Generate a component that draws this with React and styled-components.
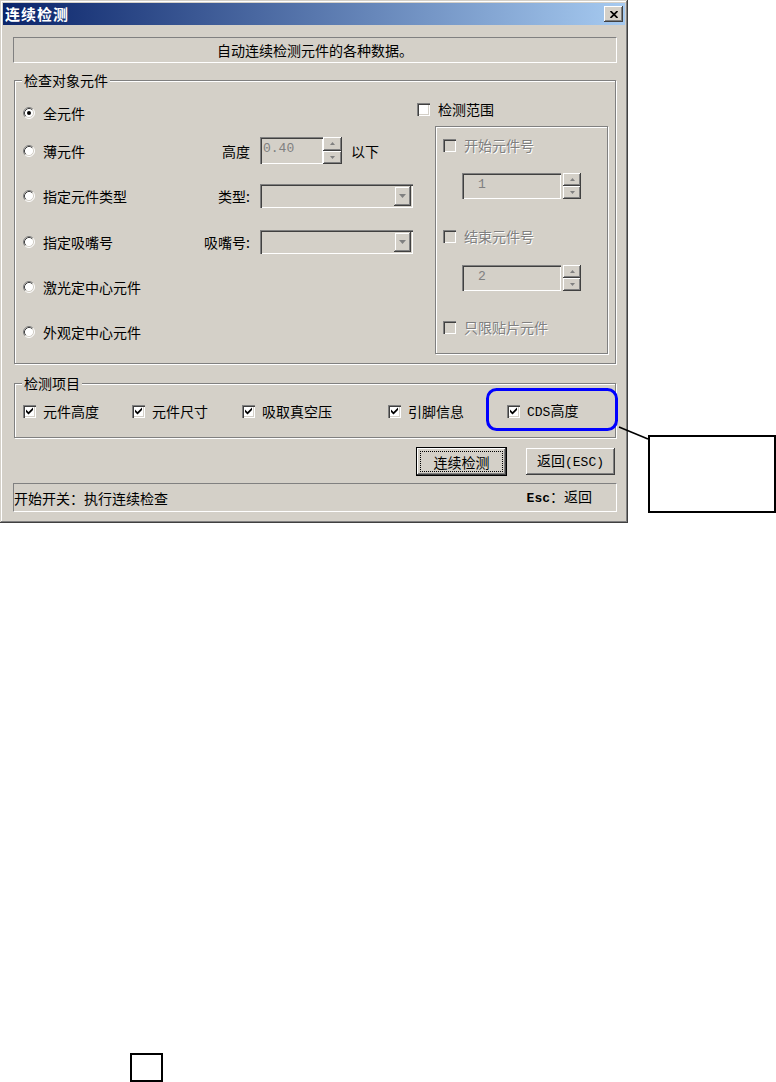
import React from 'react';
import styled, { createGlobalStyle } from 'styled-components';

const GlobalStyle = createGlobalStyle`
  html, body {
    margin: 0;
    padding: 0;
    background: #fff;
    overflow: hidden;
  }
  body {
    font-family: "Noto Sans CJK SC", "Noto Sans", sans-serif;
    font-size: 14px;
    line-height: 16px;
    color: #000;
  }
`;

const Page = styled.div`
  position: relative;
  width: 776px;
  height: 1082px;
`;

const TopRow = styled.div`
  display: flex;
  align-items: flex-start;
`;

const Window = styled.div`
  width: 628px;
  height: 523px;
  box-sizing: border-box;
  padding: 3px;
  background: #d4d0c8;
  box-shadow: inset -1px -1px #404040, inset 1px 1px #d4d0c8,
    inset -2px -2px #808080, inset 2px 2px #fff;
  display: flex;
  flex-direction: column;
`;

const TitleBar = styled.div`
  height: 22px;
  display: flex;
  align-items: center;
  justify-content: space-between;
  padding: 0 2px 0 2px;
  background: linear-gradient(to right, #0a246a, #a6caf0);
`;

const Title = styled.span`
  color: #fff;
  font-weight: bold;
  font-size: 15px;
  letter-spacing: 1px;
`;

const CloseButton = styled.div`
  width: 19px;
  height: 16px;
  background: #d4d0c8;
  box-shadow: inset -1px -1px #404040, inset 1px 1px #fff,
    inset -2px -2px #808080, inset 2px 2px #d4d0c8;
  display: flex;
  align-items: center;
  justify-content: center;
`;

const Body = styled.div`
  padding: 12px 8px 0 10px;
  display: flex;
  flex-direction: column;
`;

const Description = styled.div`
  width: 604px;
  height: 26px;
  box-sizing: border-box;
  border-top: 1px solid #808080;
  border-left: 1px solid #808080;
  border-bottom: 1px solid #fff;
  border-right: 1px solid #fff;
  display: flex;
  align-items: center;
  justify-content: center;
`;

const Group = styled.div`
  position: relative;
  width: 602px;
  height: ${p => p.$h}px;
  margin: ${p => p.$mt}px 0 0 1px;
  box-sizing: border-box;
  border: 1px solid #808080;
  box-shadow: inset 1px 1px #fff, 1px 1px #fff;
`;

const GroupLabel = styled.span`
  position: absolute;
  top: -9px;
  left: 7px;
  padding: 0 2px;
  background: #d4d0c8;
  line-height: 16px;
`;

const GroupBody = styled.div`
  display: flex;
  padding: 16px 7px 0 8px;
`;

const LeftCol = styled.div`
  flex: 1;
  min-width: 0;
  padding-top: 4px;
  display: flex;
  flex-direction: column;
`;

const OptionRow = styled.div`
  display: grid;
  grid-template-columns: 150px 67px 1fr;
  column-gap: 10px;
  align-items: center;
  height: 24px;
  margin-top: ${p => p.$mt || 0}px;
`;

const Option = styled.label`
  display: flex;
  align-items: center;
  gap: 8px;
  white-space: nowrap;
`;

const FieldLabel = styled.span`
  justify-self: end;
  white-space: nowrap;
`;

const Controls = styled.div`
  display: flex;
  align-items: center;
  gap: 9px;
`;

const RightCol = styled.div`
  flex: none;
  width: 191px;
  display: flex;
  flex-direction: column;
`;

const CheckRow = styled.label`
  display: flex;
  align-items: center;
  gap: ${p => p.$gap || 8}px;
  height: 24px;
  width: ${p => (p.$w ? `${p.$w}px` : 'auto')};
  flex: none;
  margin-top: ${p => p.$mt || 0}px;
  white-space: nowrap;
  color: ${p => (p.$disabled ? '#808080' : '#000')};
  text-shadow: ${p => (p.$disabled ? '1px 1px 0 #fff' : 'none')};
`;

const InnerFrame = styled.div`
  width: 173px;
  height: 228px;
  margin: 5px 0 0 18px;
  box-sizing: border-box;
  border: 1px solid #808080;
  box-shadow: inset 1px 1px #fff, 1px 1px #fff;
  padding: 6px 0 0 7px;
  display: flex;
  flex-direction: column;
`;

const Box = styled.span`
  width: 13px;
  height: 13px;
  flex: none;
  box-sizing: border-box;
  background: ${p => (p.$disabled ? '#d4d0c8' : '#fff')};
  box-shadow: inset 1px 1px #808080, inset 2px 2px #404040,
    inset -1px -1px #fff, inset -2px -2px #d4d0c8;
  display: flex;
  align-items: center;
  justify-content: center;
`;

const SpinBox = styled.div`
  display: flex;
  height: ${p => p.$h}px;
  margin: ${p => p.$mt || 0}px 0 0 ${p => p.$ml || 0}px;
`;

const SpinInput = styled.div`
  width: ${p => p.$w}px;
  box-sizing: border-box;
  background: #d4d0c8;
  box-shadow: inset 1px 1px #808080, inset 2px 2px #404040,
    inset -1px -1px #fff, inset -2px -2px #d4d0c8;
  padding: 4px 0 0 ${p => p.$pad}px;
  color: #808080;
  font-family: "Liberation Mono", monospace;
  font-size: 13px;
`;

const SpinButtons = styled.div`
  width: ${p => p.$w}px;
  margin-left: ${p => p.$gap || 0}px;
  display: flex;
  flex-direction: column;
`;

const RaisedButton = styled.div`
  flex: 1;
  background: #d4d0c8;
  box-shadow: inset -1px -1px #404040, inset 1px 1px #fff,
    inset -2px -2px #808080;
  display: flex;
  align-items: center;
  justify-content: center;
`;

const Combo = styled.div`
  width: 153px;
  height: 24px;
  box-sizing: border-box;
  padding: 2px;
  background: #d4d0c8;
  box-shadow: inset 1px 1px #808080, inset 2px 2px #404040,
    inset -1px -1px #fff, inset -2px -2px #d4d0c8;
  display: flex;
  justify-content: flex-end;
`;

const DropButton = styled.div`
  width: 17px;
  background: #d4d0c8;
  box-shadow: inset -1px -1px #404040, inset 1px 1px #d4d0c8,
    inset -2px -2px #808080, inset 2px 2px #fff;
  display: flex;
  align-items: center;
  justify-content: center;
`;

const ItemsRow = styled.div`
  display: flex;
  padding: 15px 0 0 8px;
`;

const Latin = styled.span`
  font-family: "Liberation Mono", monospace;
  font-size: 13px;
  font-weight: ${p => (p.$bold ? 'bold' : 'normal')};
`;

const ButtonRow = styled.div`
  display: flex;
  justify-content: flex-end;
  gap: 18px;
  margin-top: 9px;
  padding-right: 1px;
`;

const PushButton = styled.div`
  width: 91px;
  height: 29px;
  box-sizing: border-box;
  background: #d4d0c8;
  border: 1px solid ${p => (p.$default ? '#000' : 'transparent')};
  box-shadow: ${p =>
    p.$default
      ? 'inset -1px -1px #404040, inset 1px 1px #fff, inset -2px -2px #808080'
      : 'inset -1px -1px #404040, inset 1px 1px #fff, inset -2px -2px #808080, inset 2px 2px #d4d0c8'};
  display: flex;
  align-items: center;
  justify-content: center;
  padding: 3px;
`;

const FocusRing = styled.span`
  flex: 1;
  align-self: stretch;
  display: flex;
  align-items: center;
  justify-content: center;
  border: 1px dotted #000;
`;

const StatusBar = styled.div`
  width: 604px;
  height: 29px;
  margin-top: 7px;
  box-sizing: border-box;
  border-top: 1px solid #808080;
  border-left: 1px solid #808080;
  border-bottom: 1px solid #fff;
  border-right: 1px solid #fff;
  display: flex;
  align-items: center;
  justify-content: space-between;
  padding: 0 24px 0 0;
`;

const Callout = styled.div`
  width: 128px;
  height: 78px;
  margin: 435px 0 0 20px;
  box-sizing: border-box;
  border: 2px solid #000;
  background: #fff;
`;

const SmallBox = styled.div`
  width: 33px;
  height: 29px;
  margin: 530px 0 0 130px;
  box-sizing: border-box;
  border: 2px solid #000;
`;

const Overlay = styled.svg`
  position: absolute;
  left: 0;
  top: 0;
  pointer-events: none;
`;

function Radio({ checked }) {
  return (
    <svg width="12" height="12" viewBox="0 0 12 12" style={{ flex: 'none' }}>
      <circle cx="6" cy="6" r="5" fill="#fff" />
      <path d="M2.11 9.89 A5.5 5.5 0 0 1 9.89 2.11" fill="none" stroke="#808080" />
      <path d="M9.89 2.11 A5.5 5.5 0 0 1 2.11 9.89" fill="none" stroke="#fff" />
      <path d="M2.82 9.18 A4.5 4.5 0 0 1 9.18 2.82" fill="none" stroke="#404040" />
      <path d="M9.18 2.82 A4.5 4.5 0 0 1 2.82 9.18" fill="none" stroke="#d4d0c8" />
      {checked && <circle cx="6" cy="6" r="2" fill="#000" />}
    </svg>
  );
}

function Check({ checked, disabled }) {
  return (
    <Box $disabled={disabled}>
      {checked && (
        <svg width="7" height="8" viewBox="0 0 7 8">
          <polygon points="0,2.5 2.5,5 7,0.5 7,3 2.5,7.5 0,5" fill="#000" />
        </svg>
      )}
    </Box>
  );
}

function Arrow({ up, w = 5, h = 3 }) {
  return (
    <svg width={w} height={h} viewBox={`0 0 ${w} ${h}`}>
      <polygon
        points={up ? `0,${h} ${w / 2},0 ${w},${h}` : `0,0 ${w},0 ${w / 2},${h}`}
        fill="#808080"
      />
    </svg>
  );
}

function Spin({ value, w, h, pad, btnW, gap, mt, ml }) {
  return (
    <SpinBox $h={h} $mt={mt} $ml={ml}>
      <SpinInput $w={w} $pad={pad}>{value}</SpinInput>
      <SpinButtons $w={btnW} $gap={gap}>
        <RaisedButton><Arrow up /></RaisedButton>
        <RaisedButton><Arrow /></RaisedButton>
      </SpinButtons>
    </SpinBox>
  );
}

function ComboBox() {
  return (
    <Combo>
      <DropButton><Arrow w={7} h={4} /></DropButton>
    </Combo>
  );
}

const inspectItems = [
  { label: '元件高度', w: 109 },
  { label: '元件尺寸', w: 110 },
  { label: '吸取真空压', w: 146 },
  { label: '引脚信息', w: 119 },
];

export default function App() {
  return (
    <Page>
      <GlobalStyle />
      <TopRow>
        <Window>
          <TitleBar>
            <Title>连续检测</Title>
            <CloseButton>
              <svg width="8" height="7" viewBox="0 0 8 7">
                <path d="M0.5 0 L7.5 7 M7.5 0 L0.5 7" stroke="#000" strokeWidth="1.7" />
              </svg>
            </CloseButton>
          </TitleBar>
          <Body>
            <Description>自动连续检测元件的各种数据。</Description>

            <Group $h={284} $mt={17}>
              <GroupLabel>检查对象元件</GroupLabel>
              <GroupBody>
                <LeftCol>
                  <OptionRow>
                    <Option><Radio checked />全元件</Option>
                  </OptionRow>
                  <OptionRow $mt={12}>
                    <Option><Radio />薄元件</Option>
                    <FieldLabel>高度</FieldLabel>
                    <Controls>
                      <Spin value="0.40" w={63} h={27} pad={3} btnW={19} />
                      <span>以下</span>
                    </Controls>
                  </OptionRow>
                  <OptionRow $mt={23}>
                    <Option><Radio />指定元件类型</Option>
                    <FieldLabel>类型:</FieldLabel>
                    <Controls><ComboBox /></Controls>
                  </OptionRow>
                  <OptionRow $mt={22}>
                    <Option><Radio />指定吸嘴号</Option>
                    <FieldLabel>吸嘴号:</FieldLabel>
                    <Controls><ComboBox /></Controls>
                  </OptionRow>
                  <OptionRow $mt={21}>
                    <Option><Radio />激光定中心元件</Option>
                  </OptionRow>
                  <OptionRow $mt={21}>
                    <Option><Radio />外观定中心元件</Option>
                  </OptionRow>
                </LeftCol>
                <RightCol>
                  <CheckRow><Check />检测范围</CheckRow>
                  <InnerFrame>
                    <CheckRow $disabled><Check disabled />开始元件号</CheckRow>
                    <Spin value="1" w={99} h={26} pad={16} btnW={18} gap={2} mt={16} ml={19} />
                    <CheckRow $disabled $mt={25}><Check disabled />结束元件号</CheckRow>
                    <Spin value="2" w={99} h={26} pad={16} btnW={18} gap={2} mt={17} ml={19} />
                    <CheckRow $disabled $mt={24}><Check disabled />只限贴片元件</CheckRow>
                  </InnerFrame>
                </RightCol>
              </GroupBody>
            </Group>

            <Group $h={55} $mt={19}>
              <GroupLabel>检测项目</GroupLabel>
              <ItemsRow>
                {inspectItems.map(item => (
                  <CheckRow key={item.label} $w={item.w} $gap={7}>
                    <Check checked />
                    {item.label}
                  </CheckRow>
                ))}
                <CheckRow $gap={7}>
                  <Check checked />
                  <span><Latin>CDS</Latin>高度</span>
                </CheckRow>
              </ItemsRow>
            </Group>

            <ButtonRow>
              <PushButton $default>
                <FocusRing>连续检测</FocusRing>
              </PushButton>
              <PushButton>
                <span>返回<Latin>(ESC)</Latin></span>
              </PushButton>
            </ButtonRow>

            <StatusBar>
              <span>开始开关：执行连续检查</span>
              <span><Latin $bold>Esc</Latin>：返回</span>
            </StatusBar>
          </Body>
        </Window>
        <Callout />
      </TopRow>
      <SmallBox />
      <Overlay width="776" height="530" viewBox="0 0 776 530">
        <rect x="487.5" y="389.5" width="129" height="40" rx="9" fill="none" stroke="#0000ff" strokeWidth="3" />
        <line x1="619" y1="427" x2="648" y2="439" stroke="#000" strokeWidth="1.5" />
      </Overlay>
    </Page>
  );
}
